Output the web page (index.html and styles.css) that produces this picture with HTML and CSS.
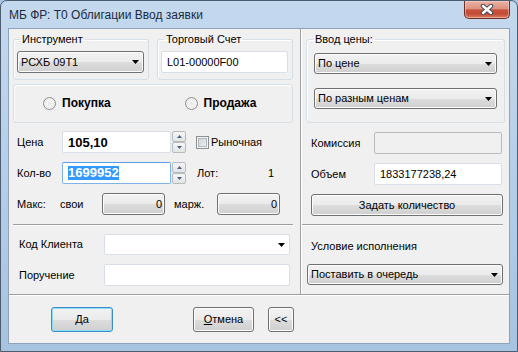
FILE: index.html
```html
<!DOCTYPE html>
<html lang="ru">
<head>
    <meta charset="UTF-8">
    <title>МБ ФР: Т0 Облигации Ввод заявки</title>
    <link rel="stylesheet" href="styles.css">
</head>
<body>
    <div class="window">
        <div class="titlebar">
            <span class="title">МБ ФР: Т0 Облигации Ввод заявки</span>
            <button class="close-btn" aria-label="Закрыть">
                <svg width="14" height="11" viewBox="0 0 14 11">
                    <path d="M3 2 L11 9 M11 2 L3 9" stroke="#4a4f58" stroke-width="4.6" stroke-linecap="round"/>
                    <path d="M3 2 L11 9 M11 2 L3 9" stroke="#fff" stroke-width="2.4" stroke-linecap="round"/>
                </svg>
            </button>
        </div>

        <div class="client">
            <div class="main">
                <div class="left">
                    <div class="top-row">
                        <fieldset class="group">
                            <legend>Инструмент</legend>
                            <div class="combo">
                                <span>РСХБ 09Т1</span>
                                <svg class="arrow" width="7" height="4" viewBox="0 0 7 4"><polygon points="0,0 7,0 3.5,4"/></svg>
                            </div>
                        </fieldset>
                        <fieldset class="group">
                            <legend>Торговый Счет</legend>
                            <div class="textbox">L01-00000F00</div>
                        </fieldset>
                    </div>

                    <div class="side-box">
                        <label class="radio"><span class="radio-dot"></span>Покупка</label>
                        <label class="radio"><span class="radio-dot"></span>Продажа</label>
                    </div>

                    <div class="price-section">
                        <div class="row">
                            <span class="row-label">Цена</span>
                            <div class="textbox spin-box strong">105,10</div>
                            <div class="spinner">
                                <span class="spin-btn"><svg width="5" height="3" viewBox="0 0 5 3"><polygon points="0,3 5,3 2.5,0"/></svg></span>
                                <span class="spin-btn"><svg width="5" height="3" viewBox="0 0 5 3"><polygon points="0,0 5,0 2.5,3"/></svg></span>
                            </div>
                            <label class="check"><span class="check-box"></span>Рыночная</label>
                        </div>
                        <div class="row">
                            <span class="row-label">Кол-во</span>
                            <div class="textbox spin-box strong focused"><span class="sel">1699952</span></div>
                            <div class="spinner">
                                <span class="spin-btn"><svg width="5" height="3" viewBox="0 0 5 3"><polygon points="0,3 5,3 2.5,0"/></svg></span>
                                <span class="spin-btn"><svg width="5" height="3" viewBox="0 0 5 3"><polygon points="0,0 5,0 2.5,3"/></svg></span>
                            </div>
                            <span class="lot-label">Лот:</span>
                            <span class="lot-value">1</span>
                        </div>
                        <div class="row">
                            <span class="max-label">Макс:</span>
                            <span class="max-label">свои</span>
                            <div class="btn value-btn">0</div>
                            <span class="max-label marg">марж.</span>
                            <div class="btn value-btn">0</div>
                        </div>
                    </div>

                    <div class="client-section">
                        <div class="row">
                            <span class="wide-label">Код Клиента</span>
                            <div class="combo edit">
                                <span></span>
                                <svg class="arrow" width="7" height="4" viewBox="0 0 7 4"><polygon points="0,0 7,0 3.5,4"/></svg>
                            </div>
                        </div>
                        <div class="row">
                            <span class="wide-label">Поручение</span>
                            <div class="textbox wide-box"></div>
                        </div>
                    </div>
                </div>

                <div class="right">
                    <fieldset class="group price-mode">
                        <legend>Ввод цены:</legend>
                        <div class="combo">
                            <span>По цене</span>
                            <svg class="arrow" width="7" height="4" viewBox="0 0 7 4"><polygon points="0,0 7,0 3.5,4"/></svg>
                        </div>
                        <div class="combo">
                            <span>По разным ценам</span>
                            <svg class="arrow" width="7" height="4" viewBox="0 0 7 4"><polygon points="0,0 7,0 3.5,4"/></svg>
                        </div>
                    </fieldset>

                    <div class="amount-section">
                        <div class="row">
                            <span class="amount-label">Комиссия</span>
                            <div class="textbox amount-box disabled"></div>
                        </div>
                        <div class="row">
                            <span class="amount-label">Объем</span>
                            <div class="textbox amount-box">1833177238,24</div>
                        </div>
                        <div class="btn full-btn">Задать количество</div>
                    </div>

                    <div class="exec-section">
                        <span>Условие исполнения</span>
                        <div class="combo exec-combo">
                            <span>Поставить в очередь</span>
                            <svg class="arrow" width="7" height="4" viewBox="0 0 7 4"><polygon points="0,0 7,0 3.5,4"/></svg>
                        </div>
                    </div>
                </div>
            </div>

            <div class="footer">
                <button class="btn dialog-btn default"><u>Д</u>а</button>
                <button class="btn dialog-btn cancel"><u>О</u>тмена</button>
                <button class="btn dialog-btn more">&lt;&lt;</button>
            </div>
        </div>
    </div>
</body>
</html>
```

FILE: styles.css
```css
:root {
    --face: #f0f0f0;
    --etch-dark: #a0a0a0;
    --group-line: #d5dfe5;
    --field-line: #d9dfe6;
    --btn-line: #707070;
    --focus-line: #7eb4ea;
    --select-bg: #3399ff;
}

* {
    box-sizing: border-box;
}

body {
    margin: 0;
    font-family: "Liberation Sans", Arial, sans-serif;
    font-size: 11px;
    line-height: 13px;
    color: #000;
    background: #a9c4e0;
}

/* window frame */

.window {
    width: 518px;
    height: 352px;
    display: flex;
    flex-direction: column;
    padding: 0 7px 7px;
    border: 1px solid #4d5d70;
    border-radius: 7px 7px 0 0;
    background: linear-gradient(180deg, #c4d9ee 0%, #b8d0e9 40%, #a8c3e0 100%);
}

.titlebar {
    height: 27px;
    flex-shrink: 0;
    display: flex;
    justify-content: space-between;
    align-items: flex-start;
}

.title {
    padding: 7px 0 0 1px;
    font-size: 12px;
    line-height: 15px;
    color: #1a2a40;
}

.close-btn {
    width: 46px;
    height: 18px;
    padding: 0;
    display: flex;
    align-items: center;
    justify-content: center;
    border: 1px solid #6b2f28;
    border-top: none;
    border-radius: 0 0 5px 5px;
    background: linear-gradient(180deg, #eab0a2 0%, #dd9483 45%, #c8533f 52%, #c44a36 75%, #dc7c5f 100%);
    box-shadow: inset 0 0 0 1px rgba(255, 220, 210, 0.5);
}

.client {
    flex: 1;
    display: flex;
    flex-direction: column;
    background: var(--face);
    border: 1px solid #8fa3b8;
}

.main {
    display: flex;
    height: 265px;
}

.left {
    width: 292px;
    padding: 4px 7px 0 4px;
    border-right: 1px solid var(--etch-dark);
}

.right {
    flex: 1;
    padding: 4px 4px 0 5px;
    box-shadow: inset 1px 0 0 #fff;
}

/* group boxes */

.top-row {
    display: flex;
    gap: 8px;
}

.group {
    width: 136px;
    min-width: 0;
    margin: 0;
    padding: 5px 4px 6px 3px;
    border: 1px solid var(--group-line);
    border-radius: 3px;
    box-shadow: inset 1px 1px 0 #fff;
}

.group legend {
    margin-left: 3px;
    padding: 0 2px;
    line-height: 13px;
}

.price-mode {
    width: 199px;
    padding: 7px 7px 13px;
    display: flex;
    flex-direction: column;
    gap: 14px;
}

.price-mode legend {
    margin-left: -1px;
}

.side-box {
    height: 39px;
    margin-top: 4px;
    padding-left: 29px;
    display: flex;
    align-items: center;
    gap: 74px;
    border: 1px solid var(--group-line);
    border-radius: 3px;
    box-shadow: inset 1px 1px 0 #fff;
}

.radio {
    display: flex;
    align-items: center;
    gap: 6px;
    font-size: 12px;
    font-weight: bold;
}

.radio-dot {
    width: 13px;
    height: 13px;
    border-radius: 50%;
    border: 1px solid #8e8f8f;
    background: radial-gradient(circle at 50% 50%, #e6e6e6 0%, #f6f6f6 40%, #cfcfcf 85%, #c2c2c2 100%);
    box-shadow: inset 0 0 0 1px #f4f4f4;
}

/* controls */

.combo {
    height: 22px;
    display: flex;
    align-items: center;
    justify-content: space-between;
    padding: 0 4px 0 3px;
    border: 1px solid var(--btn-line);
    border-radius: 3px;
    background: linear-gradient(180deg, #f2f2f2 0%, #ebebeb 50%, #dddddd 51%, #cfcfcf 100%);
    box-shadow: inset 0 0 0 1px #fcfcfc;
}

.price-mode .combo {
    height: 21px;
}

.combo.edit {
    width: 186px;
    height: 21px;
    border-color: var(--field-line);
    border-radius: 2px;
    background: #fff;
    box-shadow: none;
}

.arrow {
    fill: #000;
}

.textbox {
    height: 22px;
    display: flex;
    align-items: center;
    padding: 0 5px;
    background: #fff;
    border: 1px solid var(--field-line);
    border-radius: 2px;
}

.textbox.disabled {
    background: var(--face);
    border-color: #b8bcc0;
}

.strong {
    font-size: 13px;
    font-weight: bold;
}

.focused {
    border-color: var(--focus-line);
    border-top-color: #569de5;
}

.sel {
    background: var(--select-bg);
    color: #fff;
    line-height: 14px;
}

.btn {
    height: 22px;
    display: flex;
    align-items: center;
    justify-content: center;
    padding: 0;
    font: inherit;
    color: #000;
    border: 1px solid var(--btn-line);
    border-radius: 3px;
    background: linear-gradient(180deg, #f2f2f2 0%, #ebebeb 50%, #dddddd 51%, #cfcfcf 100%);
    box-shadow: inset 0 0 0 1px #fcfcfc;
}

/* price rows */

.price-section {
    padding: 8px 0 9px;
    display: flex;
    flex-direction: column;
    gap: 9px;
    border-bottom: 1px solid var(--etch-dark);
    box-shadow: 0 1px 0 #fff;
}

.row {
    height: 22px;
    display: flex;
    align-items: center;
}

.price-section .row {
    padding-left: 4px;
}

.row-label {
    width: 45px;
}

.spin-box {
    width: 109px;
    padding-left: 5px;
}

.spinner {
    width: 14px;
    height: 22px;
    margin-left: 1px;
    display: flex;
    flex-direction: column;
}

.spin-btn {
    height: 11px;
    display: flex;
    align-items: center;
    justify-content: center;
    border: 1px solid #b7babe;
    border-radius: 2px;
    background: linear-gradient(180deg, #f6f6f6 0%, #e4e4e4 100%);
    fill: #4d6185;
}

.check {
    margin-left: 10px;
    display: flex;
    align-items: center;
    gap: 2px;
}

.check-box {
    width: 13px;
    height: 13px;
    border: 1px solid #8e8f8f;
    background: linear-gradient(135deg, #c9cdd3 0%, #f4f4f4 100%);
    box-shadow: inset 0 0 0 1px #f4f4f4, inset 0 0 0 2px #b3b8be;
}

.lot-label {
    margin-left: 11px;
}

.lot-value {
    margin-left: auto;
    margin-right: 19px;
}

.max-label {
    width: 43px;
}

.max-label + .max-label {
    width: 42px;
}

.max-label.marg {
    width: 43px;
    margin-left: 9px;
}

.value-btn {
    width: 63px;
    justify-content: flex-end;
    padding-right: 2px;
}

/* client rows */

.client-section {
    padding: 9px 0 0 6px;
    display: flex;
    flex-direction: column;
    gap: 9px;
}

.client-section .row:first-child {
    height: 21px;
}

.wide-label {
    width: 85px;
}

.wide-box {
    width: 186px;
}

/* right column */

.amount-section {
    margin: 0 2px 0 -4px;
    padding: 9px 0 8px 9px;
    display: flex;
    flex-direction: column;
    gap: 9px;
    border-bottom: 1px solid var(--etch-dark);
    box-shadow: 0 1px 0 #fff;
}

.amount-label {
    width: 63px;
}

.amount-box {
    width: 128px;
}

.full-btn {
    width: 100%;
}

.exec-section {
    padding: 15px 2px 0 1px;
    display: flex;
    flex-direction: column;
    gap: 11px;
}

.exec-section > span {
    padding-left: 4px;
}

.exec-combo {
    height: 21px;
}

/* footer buttons */

.footer {
    flex: 1;
    display: flex;
    align-items: flex-start;
    padding: 12px 0 0 42px;
    border-top: 1px solid var(--etch-dark);
    box-shadow: inset 0 1px 0 #fff;
}

.dialog-btn {
    height: 25px;
}

.dialog-btn.default {
    width: 62px;
    border-color: #3c8ccc;
    box-shadow: inset 0 0 0 1px #8fdcf8;
}

.dialog-btn.cancel {
    width: 61px;
    margin-left: 80px;
}

.dialog-btn.more {
    width: 26px;
    margin-left: 14px;
}
```
